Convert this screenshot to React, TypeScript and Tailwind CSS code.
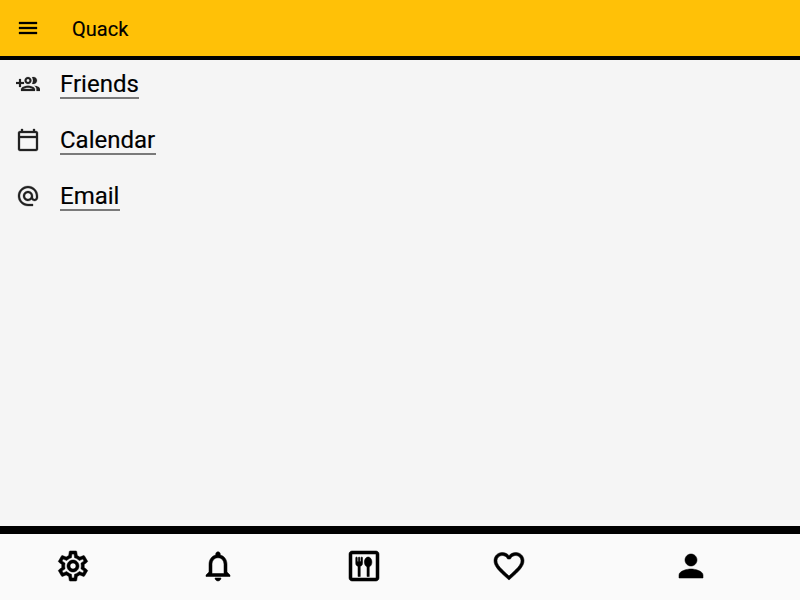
import {
  MdMenu,
  MdOutlineCalendarToday,
  MdAlternateEmail,
  MdOutlineSettings,
  MdNotificationsNone,
  MdOutlineDining,
  MdFavoriteBorder,
  MdPerson,
} from 'react-icons/md';

type IconProps = { size?: number; className?: string };

// Group outline with the plus sign on its left side.
function GroupPlusIcon({ size = 24, className }: IconProps) {
  return (
    <svg viewBox="0 0 24 24" width={size} height={size} fill="currentColor" stroke="currentColor" className={className}>
      <path d="M8 12H5v3H3v-3H0v-2h3V7h2v3h3z" />
      <path
        transform="translate(3 0)"
        d="M9 13.75c-2.34 0-7 1.17-7 3.5V19h14v-1.75c0-2.33-4.66-3.5-7-3.5zM4.34 17c.84-.58 2.87-1.25 4.66-1.25s3.82.67 4.66 1.25H4.34zM9 12c1.93 0 3.5-1.57 3.5-3.5S10.93 5 9 5 5.5 6.57 5.5 8.5 7.07 12 9 12zm0-5c.83 0 1.5.67 1.5 1.5S9.83 10 9 10s-1.5-.67-1.5-1.5S8.17 7 9 7z"
      />
      <path
        transform="translate(2.5 0)"
        d="M16.04 13.81c1.16.84 1.96 1.96 1.96 3.44V19h3.5v-1.75c0-2.02-3-3.17-5.46-3.44zM15 12c1.93 0 3.5-1.57 3.5-3.5S16.93 5 15 5c-.54 0-1.04.13-1.5.35.63.89 1 1.98 1 3.15s-.37 2.26-1 3.15c.46.22.96.35 1.5.35z"
      />
    </svg>
  );
}

const links = [
  { label: 'Friends', Icon: GroupPlusIcon, weight: '[stroke-width:0.2px]' },
  { label: 'Calendar', Icon: MdOutlineCalendarToday, weight: '[&_path:last-child]:[stroke-width:0.3px]' },
  { label: 'Email', Icon: MdAlternateEmail, weight: '[&_path:last-child]:[stroke-width:0.3px]' },
];

const tabs = [
  { name: 'Settings', Icon: MdOutlineSettings, grow: 'flex-[2]' },
  { name: 'Notifications', Icon: MdNotificationsNone, grow: 'flex-[2]' },
  { name: 'Dining', Icon: MdOutlineDining, grow: 'flex-[2]' },
  { name: 'Favorites', Icon: MdFavoriteBorder, grow: 'flex-[2]' },
  { name: 'Profile', Icon: MdPerson, grow: 'flex-[3]' },
];

export default function App() {
  return (
    <div className="flex h-screen flex-col overflow-hidden bg-[#f5f5f5] font-[Roboto,sans-serif] text-black [-webkit-text-stroke:0.15px]">
      <header className="flex h-[60px] shrink-0 items-center border-b-4 border-black bg-[#ffc107] px-4">
        <button aria-label="Menu" className="flex w-14 items-center">
          <MdMenu size={24} className="[&_path:last-child]:[stroke-width:0.3px]" />
        </button>
        <h1 className="pt-0.5 text-xl leading-6">Quack</h1>
      </header>
      <main className="flex-1">
        <ul>
          {links.map(({ label, Icon, weight }) => (
            <li key={label} className="flex h-14 items-start gap-5 px-4 pt-2.5">
              <Icon size={24} className={`mt-0.5 text-[#212121] ${weight}`} />
              <a href="#" className="border-b-2 border-[#7a7a7a] pr-[0.5px] pt-px text-2xl leading-[26px]">
                {label}
              </a>
            </li>
          ))}
        </ul>
      </main>
      <nav className="flex h-[74px] shrink-0 border-t-8 border-black bg-[#fafafa] pb-0.5">
        {tabs.map(({ name, Icon, grow }) => (
          <button key={name} aria-label={name} className={`flex items-center justify-center ${grow}`}>
            <Icon size={36} className="[&_path:last-child]:[stroke-width:0.35px]" />
          </button>
        ))}
      </nav>
    </div>
  );
}
